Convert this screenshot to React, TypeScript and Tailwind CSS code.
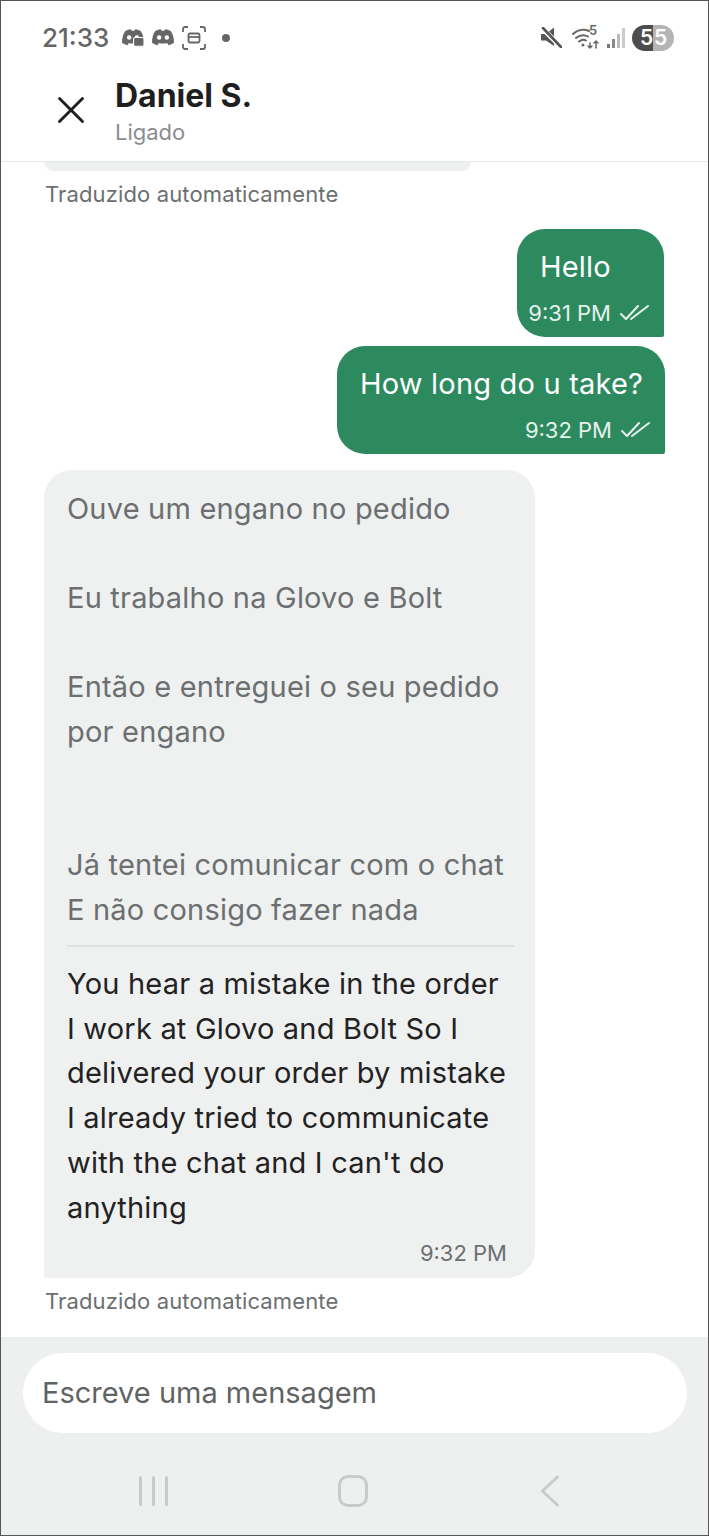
import { X } from "lucide-react";

const font = "font-['Inter',sans-serif]";

function DoubleCheck() {
  return (
    <svg width="30" height="18" viewBox="0 0 30 18" fill="none" stroke="#e6f2ec" strokeWidth="2" strokeLinecap="round" strokeLinejoin="round">
      <path d="M1 10l5 5L18 2" />
      <path d="M11 15L28 2" />
    </svg>
  );
}

function DiscordIcon({ badge }: { badge?: boolean }) {
  return (
    <svg width="22" height="19" viewBox="2 1 20 17" fill="#666">
      <path d="M5 3.500C7 2.500 9 2 10 2l.7 1.300h2.600L14 2c1 0 3 .5 5 1.500 2 3 3 6.500 3 10.500-1.500 1.200-3.300 2-5 2.500l-1.200-2c-2.500.7-5.100.7-7.600 0l-1.200 2c-1.700-.5-3.500-1.300-5-2.500 0-4 1-7.500 3-10.500z" />
      <circle cx="8.500" cy="9.500" r="2" fill="#fff" />
      <circle cx="15.500" cy="9.500" r="2" fill="#fff" />
      {badge && <rect x="12.500" y="9.500" width="9.500" height="8" rx="1.500" fill="#666" stroke="#fff" strokeWidth="1" />}
    </svg>
  );
}

function ScreenshotIcon() {
  return (
    <svg width="24" height="24" viewBox="0 0 24 24" fill="none" stroke="#666" strokeWidth="1.800">
      <path d="M1 6V3a2 2 0 0 1 2-2h3M18 1h3a2 2 0 0 1 2 2v3M23 18v3a2 2 0 0 1-2 2h-3M6 23H3a2 2 0 0 1-2-2v-3" />
      <rect x="6.500" y="7.500" width="11" height="9" rx="1.500" />
      <path d="M6.500 11h11" />
    </svg>
  );
}

function MuteIcon() {
  return (
    <svg width="21" height="21" viewBox="0 0 21 21" fill="#555">
      <path d="M0 7h5l8-6.500V19l-8-5.500H0z" />
      <path d="M1 1l19 19" stroke="#fff" strokeWidth="5" />
      <path d="M2 1l18 19" stroke="#555" strokeWidth="2.600" strokeLinecap="round" />
    </svg>
  );
}

function WifiIcon() {
  return (
    <div className="relative h-[24px] w-[29px]">
      <svg width="29" height="24" viewBox="0 0 29 24" fill="none" stroke="#666" strokeWidth="2" strokeLinecap="round">
        <path d="M1 8c5-5 12-5 16-3M4 12c4-3.500 9-3.500 12-1.500M7 15.500c2.500-2 5.500-2 7-1" />
        <circle cx="11" cy="19" r="1.500" fill="#666" stroke="none" />
        <path d="M18 17v5M16 20l2 2 2-2M24 22v-7M22 17l2-2 2 2" strokeWidth="1.500" />
      </svg>
      <span className="absolute top-[-3px] left-[17px] text-[13px] leading-[15px] font-semibold text-[#666]">5</span>
    </div>
  );
}

function SignalIcon() {
  return (
    <div className="flex h-[20px] items-end gap-[2px]">
      <div className="h-[4px] w-[3px] bg-[#777]" />
      <div className="h-[9px] w-[3px] bg-[#888]" />
      <div className="h-[14px] w-[3px] bg-[#bbb]" />
      <div className="h-[20px] w-[3px] bg-[#ccc]" />
    </div>
  );
}

function Battery() {
  return (
    <div className={`flex h-[26px] w-[42px] overflow-hidden rounded-full text-[21px] leading-[26px] font-semibold text-white ${font}`}>
      <div className="w-[21px] bg-[#4d4d4d] pl-[8px]">5</div>
      <div className="w-[21px] bg-[#b4b4b4] pl-[1px]">5</div>
    </div>
  );
}

function Sent({ text, time, className, textClass }: { text: string; time: string; className: string; textClass: string }) {
  return (
    <div className={`ml-auto flex h-[108px] flex-col rounded-[28px] rounded-br-[2px] bg-[#2d8a5f] pt-[16px] text-white ${className}`}>
      <div className={`text-[29px] leading-[44px] tracking-[0.2px] ${textClass}`}>{text}</div>
      <div className="mt-[4px] flex items-center justify-end gap-[9px] text-[22px] leading-[40px] whitespace-nowrap text-[#e6f2ec]">
        {time}
        <DoubleCheck />
      </div>
    </div>
  );
}

function Translated() {
  return <div className="pl-[1px] text-[22px] leading-[30px] tracking-[0.13px] text-[#6b6f70]">Traduzido automaticamente</div>;
}

export default function App() {
  return (
    <div className={`flex h-[1536px] w-[709px] flex-col overflow-hidden border border-[#555] bg-white ${font}`}>
      {/* status bar */}
      <div className="flex h-[70px] shrink-0 items-center pt-[3px] pr-[34px] pl-[41px]">
        <span className="text-[26px] font-medium text-[#666]">21:33</span>
        <div className="ml-[13px] flex items-center gap-[8px]">
          <DiscordIcon badge />
          <DiscordIcon />
          <ScreenshotIcon />
          <div className="ml-[8px] h-[8px] w-[8px] rounded-full bg-[#666]" />
        </div>
        <div className="ml-auto flex items-center">
          <MuteIcon />
          <div className="ml-[10px]"><WifiIcon /></div>
          <div className="ml-[6px]"><SignalIcon /></div>
          <div className="ml-[7px]"><Battery /></div>
        </div>
      </div>

      {/* header */}
      <div className="flex h-[91px] shrink-0 items-start border-b border-[#e8eaea] pl-[47px]">
        <X size={46} strokeWidth={1.500} className="mt-[16px] text-[#1f1f1f]" />
        <div className="ml-[21px]">
          <div className="text-[32px] leading-[50px] font-bold text-[#1f1f1f]">Daniel S.</div>
          <div className="-mt-[1px] text-[22px] leading-[24px] text-[#8a8d8f]">Ligado</div>
        </div>
      </div>

      {/* messages */}
      <div className="flex min-h-0 flex-1 flex-col px-[43px]">
        <div className="h-[9px] w-[427px] rounded-b-[24px] bg-[#eff0f0]" />
        <div className="mt-[8px]"><Translated /></div>

        <div className="mt-[20px] flex flex-col gap-[9px]">
          <Sent text="Hello" time="9:31 PM" className="mr-[1px] w-[147px] pr-[14px] pl-[8px]" textClass="pl-[15px]" />
          <Sent text="How long do u take?" time="9:32 PM" className="w-[328px] pr-[14px] pl-[23px]" textClass="" />
        </div>

        <div className="mt-[16px] flex h-[808px] w-[491px] flex-col rounded-[28px] rounded-bl-[2px] bg-[#eff0f0] px-[23px] pt-[17px]">
          <div className="text-[29px] leading-[44.500px] tracking-[0.2px] text-[#6b6f70]">
            <div>Ouve um engano no pedido</div>
            <div className="mt-[44.500px]">Eu trabalho na Glovo e Bolt</div>
            <div className="mt-[44.500px]">Então e entreguei o seu pedido</div>
            <div>por engano</div>
            <div className="mt-[89px]">Já tentei comunicar com o chat</div>
            <div>E não consigo fazer nada</div>
          </div>
          <div className="mt-[13px] h-[2px] w-[447px] bg-[#e1e3e3]" />
          <div className="mt-[15px] text-[29px] leading-[44.700px] tracking-[0.2px] text-[#222]">
            <div>You hear a mistake in the order</div>
            <div>I work at Glovo and Bolt So I</div>
            <div>delivered your order by mistake</div>
            <div>I already tried to communicate</div>
            <div>with the chat and I can't do</div>
            <div>anything</div>
          </div>
          <div className="mt-[3px] pr-[5px] text-right text-[22px] leading-[40px] text-[#6b6f70]">9:32 PM</div>
        </div>
        <div className="mt-[8px]"><Translated /></div>
      </div>

      {/* composer + nav */}
      <div className="flex h-[198px] shrink-0 flex-col bg-[#eef0f0] pt-[16px] pr-[21px] pl-[22px]">
        <div className="flex h-[80px] items-center rounded-[40px] bg-white pl-[19px] text-[29px] text-[#5f6364]">
          Escreve uma mensagem
        </div>
        <div className="mt-[42px] flex items-center justify-between pr-[125px] pl-[116px]">
          <div className="flex gap-[10px]">
            <div className="h-[30px] w-[3px] rounded-full bg-[#c9cbcb]" />
            <div className="h-[30px] w-[3px] rounded-full bg-[#c9cbcb]" />
            <div className="h-[30px] w-[3px] rounded-full bg-[#c9cbcb]" />
          </div>
          <div className="h-[32px] w-[30px] rounded-[10px] border-[3px] border-[#c9cbcb]" />
          <svg width="24" height="32" viewBox="0 0 24 34" fill="none" stroke="#c9cbcb" strokeWidth="3" strokeLinecap="round" strokeLinejoin="round">
            <path d="M20 2L4 17l16 15" />
          </svg>
        </div>
      </div>
    </div>
  );
}
